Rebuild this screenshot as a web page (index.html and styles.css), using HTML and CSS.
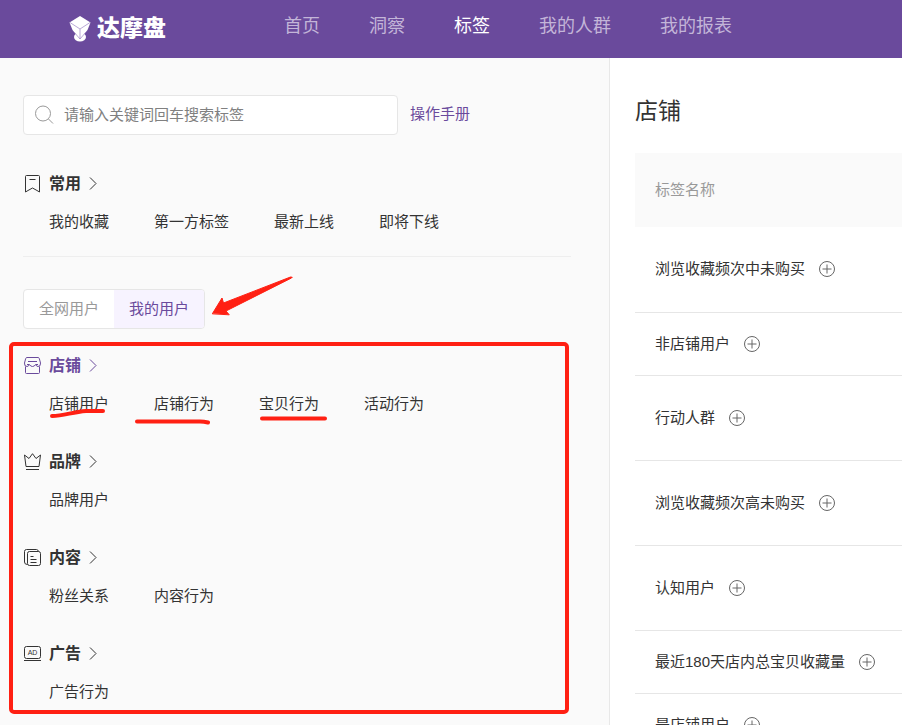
FILE: index.html
```html
<!DOCTYPE html>
<html lang="zh-CN">
<head>
  <meta charset="UTF-8">
  <meta name="viewport" content="width=device-width, initial-scale=1">
  <title>达摩盘 - 标签</title>
  <link rel="stylesheet" href="styles.css">
</head>
<body>

<!-- 加号和箭头图标，重复使用 -->
<svg class="sprite" aria-hidden="true">
  <symbol id="plus" viewBox="0 0 18 18">
    <circle cx="9" cy="9" r="7.5"/>
    <path d="M9 4.500v9M4.500 9h9"/>
  </symbol>
  <symbol id="arrow" viewBox="0 0 10 14">
    <path d="M1 .5 7 6.500 1 12.500"/>
  </symbol>
</svg>

<!-- 顶部导航 -->
<header class="header">
  <a class="logo" href="#">
    <svg class="logo-icon" viewBox="0 0 22 27" aria-hidden="true">
      <ellipse cx="11" cy="22" rx="6" ry="4.5" fill="#fff"/>
      <path d="M11 1 21.5 7.5 18.5 15 11 24.5 3.5 15 .5 7.5z" fill="#fff"/>
      <path d="M1 7.500 11 14l10-6.500M11 14v10M5 17l6 7 6-7" fill="none" stroke="#9b82c4" stroke-width=".7"/>
    </svg>
    <span>达摩盘</span>
  </a>
  <nav class="nav">
    <a href="#">首页</a>
    <a href="#">洞察</a>
    <a class="active" href="#">标签</a>
    <a href="#">我的人群</a>
    <a href="#">我的报表</a>
  </nav>
</header>

<main class="main">
  <!-- 左侧标签分类 -->
  <section class="side">
    <div class="search-row">
      <label class="search">
        <svg viewBox="0 0 20 20" aria-hidden="true"><circle cx="9" cy="8.500" r="7.500"/><path d="m14.500 14 4.500 4.500"/></svg>
        <input type="text" placeholder="请输入关键词回车搜索标签" aria-label="搜索标签">
      </label>
      <a class="manual" href="#">操作手册</a>
    </div>

    <div class="group common">
      <h3 class="group-title">
        <svg class="icon" viewBox="0 0 18 18" aria-hidden="true"><path d="M2.500 17V1.500Q2.500.5 3.500.5h12q1 0 1 1V17L14 15.500 9.500 13 5 15.500zM6.500 4.500h6"/></svg>
        常用
        <svg class="arrow" aria-hidden="true"><use href="#arrow"/></svg>
      </h3>
      <div class="items">
        <a href="#">我的收藏</a>
        <a href="#">第一方标签</a>
        <a href="#">最新上线</a>
        <a href="#">即将下线</a>
      </div>
    </div>

    <div class="tabs">
      <button type="button">全网用户</button>
      <button type="button" class="active">我的用户</button>
    </div>

    <div class="groups">
      <div class="group">
        <h3 class="group-title active">
          <svg class="icon" viewBox="0 0 18 18" aria-hidden="true"><path d="M4 .5h11q1 0 1.300 1L17.500 6q.3 3.500-2.500 3.500-1.500 0-2.500-2-1 2-3 2t-3-2q-1 2-2.500 2Q1.200 9.500 1.500 6l1.200-4.500q.3-1 1.300-1zM5 4.500h9M4 7.500h2M13 7.500h2M2.500 9.500v6q0 1 1 1h12q1 0 1-1v-6"/></svg>
          店铺
          <svg class="arrow" aria-hidden="true"><use href="#arrow"/></svg>
        </h3>
        <div class="items">
          <a href="#">店铺用户</a>
          <a href="#">店铺行为</a>
          <a href="#">宝贝行为</a>
          <a href="#">活动行为</a>
        </div>
      </div>

      <div class="group">
        <h3 class="group-title">
          <svg class="icon" viewBox="0 0 18 18" aria-hidden="true"><path d="M3 13.500 1.500 2l4.500 3.500L9.500.7 13 5.500 17.500 2 16 13.500zM3 16.500h13"/></svg>
          品牌
          <svg class="arrow" aria-hidden="true"><use href="#arrow"/></svg>
        </h3>
        <div class="items">
          <a href="#">品牌用户</a>
        </div>
      </div>

      <div class="group">
        <h3 class="group-title">
          <svg class="icon" viewBox="0 0 18 18" aria-hidden="true"><rect x="4.500" y="2.500" width="13" height="14" rx="2"/><path d="M4.500 15.500q-3 0-3-2.500V2.500q0-2 2-2h10q1.500 0 2 2M7.500 7.500h3M7.500 10.500h6M7.500 13.500h6"/></svg>
          内容
          <svg class="arrow" aria-hidden="true"><use href="#arrow"/></svg>
        </h3>
        <div class="items">
          <a href="#">粉丝关系</a>
          <a href="#">内容行为</a>
        </div>
      </div>

      <div class="group">
        <h3 class="group-title">
          <svg class="icon" viewBox="0 0 18 18" aria-hidden="true"><rect x="1.500" y="1.500" width="16" height="12" rx="2"/><path d="M1 15.500h17"/><text x="9.500" y="10" text-anchor="middle">AD</text></svg>
          广告
          <svg class="arrow" aria-hidden="true"><use href="#arrow"/></svg>
        </h3>
        <div class="items">
          <a href="#">广告行为</a>
        </div>
      </div>
    </div>

    <!-- 红色标注 -->
    <svg class="marks" viewBox="0 0 610 667" aria-hidden="true">
      <rect x="11" y="286" width="556" height="368" rx="3"/>
      <path d="M52 358c12 0 20-4 34-5h17M137 363.500h63q4 0 8 1M262 360.500h63"/>
      <path class="arrow-head" d="M212.500 255.500 222 240l1.500 5 67-26q3 0 1 1l-65.500 33 3 3.500z"/>
    </svg>
  </section>

  <!-- 右侧标签列表 -->
  <section class="content">
    <h2>店铺</h2>
    <table class="tags">
      <thead>
        <tr><th>标签名称</th></tr>
      </thead>
      <tbody>
        <tr><td><div class="tag">浏览收藏频次中未购买<button type="button" aria-label="添加"><svg><use href="#plus"/></svg></button></div></td></tr>
        <tr class="short"><td><div class="tag">非店铺用户<button type="button" aria-label="添加"><svg><use href="#plus"/></svg></button></div></td></tr>
        <tr><td><div class="tag">行动人群<button type="button" aria-label="添加"><svg><use href="#plus"/></svg></button></div></td></tr>
        <tr><td><div class="tag">浏览收藏频次高未购买<button type="button" aria-label="添加"><svg><use href="#plus"/></svg></button></div></td></tr>
        <tr><td><div class="tag">认知用户<button type="button" aria-label="添加"><svg><use href="#plus"/></svg></button></div></td></tr>
        <tr class="short"><td><div class="tag">最近180天店内总宝贝收藏量<button type="button" aria-label="添加"><svg><use href="#plus"/></svg></button></div></td></tr>
        <tr class="short"><td><div class="tag">是店铺用户<button type="button" aria-label="添加"><svg><use href="#plus"/></svg></button></div></td></tr>
      </tbody>
    </table>
  </section>
</main>

</body>
</html>
```
FILE: styles.css
```css
* {
  box-sizing: border-box;
}

body {
  margin: 0;
  height: 100vh;
  display: flex;
  flex-direction: column;
  overflow: hidden;
  font-family: "Liberation Sans", "Noto Sans CJK SC", sans-serif;
  font-size: 15px;
  line-height: 24px;
  color: #333;
  background: #fff;
}

a {
  color: inherit;
  text-decoration: none;
}

button,
input {
  font: inherit;
  color: inherit;
}

button {
  border: none;
  padding: 0;
  background: none;
  cursor: pointer;
}

svg {
  fill: none;
  stroke: currentColor;
}

.sprite {
  display: none;
}

/* 顶部导航 */
.header {
  flex: none;
  height: 58px;
  padding-left: 69px;
  display: flex;
  align-items: center;
  background: #6a4a9c;
}

.logo {
  display: flex;
  align-items: center;
  gap: 6px;
  width: 215px;
  padding-bottom: 2px;
  color: #fff;
  font-size: 23px;
  font-weight: 900;
}

.logo-icon {
  width: 22px;
  height: 27px;
  stroke: none;
}

.nav {
  display: flex;
  gap: 49px;
  padding-bottom: 6px;
  font-size: 18px;
  color: #c3b5d8;
  white-space: nowrap;
}

.nav .active {
  color: #fff;
}

.main {
  flex: 1;
  min-height: 0;
  display: grid;
  grid-template-columns: 610fr 292fr;
}

/* 左侧 */
.side {
  position: relative;
  min-width: 0;
  overflow: hidden;
  padding: 37px 38px 0 23px;
  background: #fafafa;
  border-right: 1px solid #e8e8e8;
}

.search-row {
  display: flex;
  align-items: center;
  gap: 12px;
  margin-bottom: 33px;
}

.search {
  display: flex;
  align-items: center;
  gap: 10px;
  width: 375px;
  height: 40px;
  padding: 0 10px;
  background: #fff;
  border: 1px solid #e6e6e6;
  border-radius: 4px;
}

.search svg {
  width: 20px;
  height: 20px;
  color: #999;
}

.search input {
  flex: 1;
  min-width: 0;
  padding: 0;
  border: none;
  outline: none;
  background: none;
}

.search input::placeholder {
  color: #808080;
}

.manual {
  color: #6a4a9c;
  padding-bottom: 3px;
}

.group-title {
  display: flex;
  align-items: center;
  gap: 8px;
  height: 32px;
  margin: 0 0 10px;
  font-size: 16px;
  font-weight: 700;
}

.group-title.active {
  color: #6a4a9c;
}

.icon {
  width: 18px;
  height: 18px;
}

.icon text {
  font-size: 7px;
  font-weight: 400;
  fill: currentColor;
  stroke: none;
}

.arrow {
  width: 10px;
  height: 14px;
}

.items {
  display: flex;
  gap: 45px;
  padding-left: 26px;
  white-space: nowrap;
}

.common {
  padding-bottom: 22px;
  border-bottom: 1px solid #eee;
}

.tabs {
  display: inline-flex;
  height: 40px;
  margin: 32px 0 21px;
  border: 1px solid #e6e6e6;
  border-radius: 4px;
  background: #fff;
  overflow: hidden;
}

.tabs button {
  width: 90px;
  color: #999;
}

.tabs .active {
  color: #6a4a9c;
  background: #f7f3ff;
}

.groups {
  display: grid;
  gap: 30px;
}

/* 标注层，盖在分类上面 */
.marks {
  position: absolute;
  left: 0;
  top: 0;
  width: 610px;
  height: 667px;
  stroke: #ff2013;
  stroke-width: 4;
  stroke-linecap: round;
  pointer-events: none;
}

.marks .arrow-head {
  fill: #ff2013;
  stroke-width: 1;
}

/* 右侧 */
.content {
  min-width: 0;
  overflow: hidden;
  padding: 37px 0 0 25px;
}

h2 {
  margin: 0 0 26px;
  font-size: 23px;
  font-weight: 400;
  line-height: 32px;
}

.tags {
  width: 100%;
  border-collapse: collapse;
  white-space: nowrap;
}

.tags th {
  height: 74px;
  padding: 0 20px;
  text-align: left;
  font-weight: 400;
  color: #999;
  background: #fafafa;
}

.tags td {
  height: 85px;
  padding: 0 20px;
  border-bottom: 1px solid #e6e6e6;
}

.tags .short td {
  height: 63px;
}

.tag {
  display: flex;
  align-items: center;
  gap: 13px;
}

.tag button,
.tag svg {
  display: block;
  width: 18px;
  height: 18px;
  color: #666;
}
```
